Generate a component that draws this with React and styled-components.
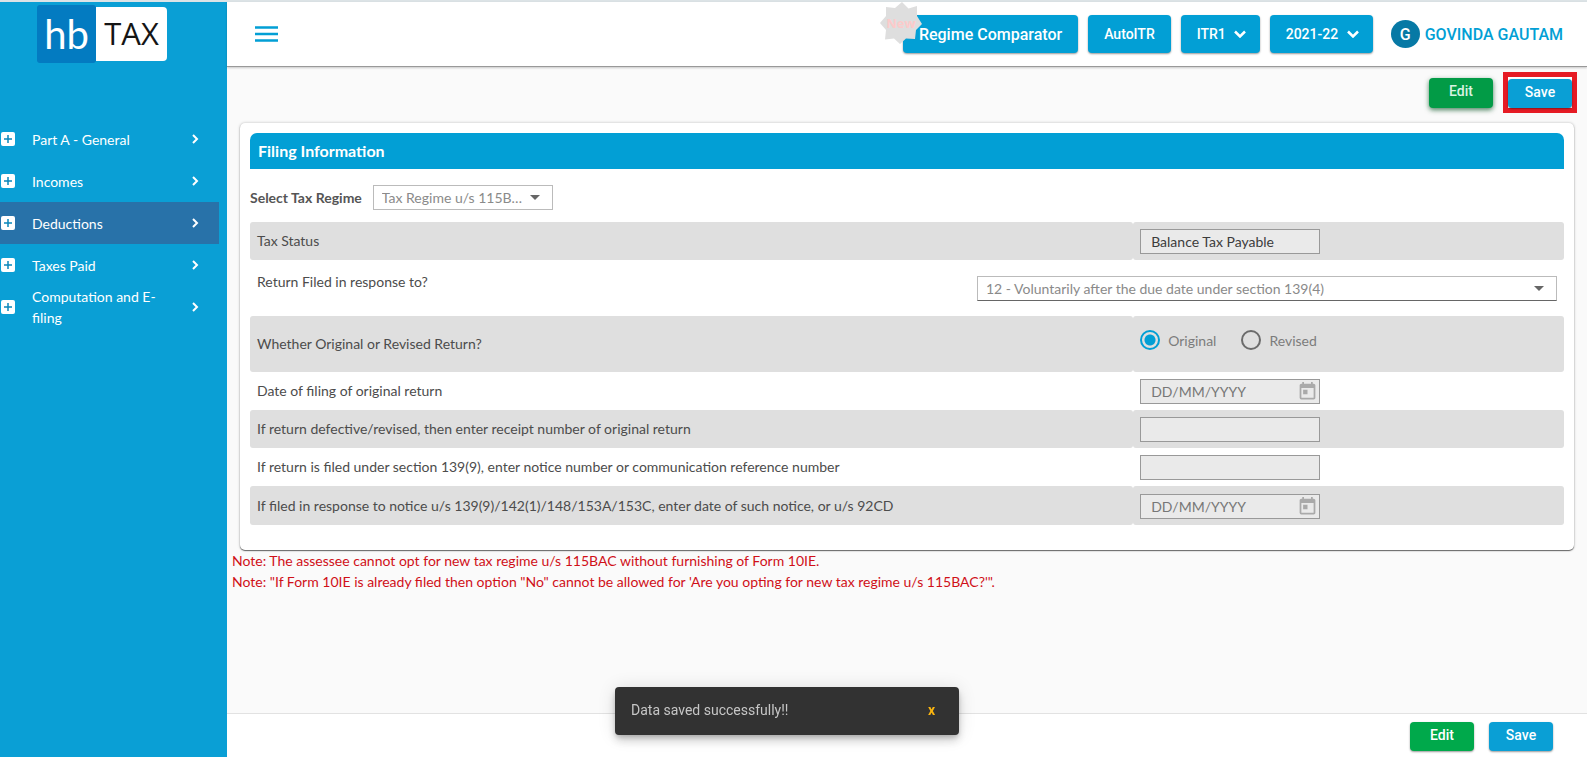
import React, { useState } from "react";
import styled, { createGlobalStyle, css } from "styled-components";
import { MdToday } from "react-icons/md";

const BLUE = "#029fd5";

const GlobalStyle = createGlobalStyle`
  *, *::before, *::after { box-sizing: border-box; }
  body {
    margin: 0;
    background: #fafafa;
    color: #444;
    font: 400 14px/21px Lato, "Liberation Sans", sans-serif;
  }
  button, input, select { font: inherit; margin: 0; }
`;

const Shell = styled.div`
  display: grid;
  grid-template-columns: 227px minmax(0, 1fr);
  min-height: 100vh;
  border-top: 2px solid #dce3e6;
`;

/* Sidebar */

const Sidebar = styled.aside`
  background: #0a9fd5;
  color: #fff;
`;

const Logo = styled.a`
  display: flex;
  align-items: center;
  justify-content: center;
  width: 130px;
  height: 58px;
  margin: 3px auto 55px 37px;
  line-height: 1;
  text-decoration: none;
`;

const LogoMark = styled.span`
  display: flex;
  align-items: center;
  justify-content: center;
  width: 59px;
  height: 58px;
  border-radius: 3px;
  background: #037bc1;
  color: #fff;
  font-size: 40px;
`;

const LogoWord = styled.span`
  display: flex;
  align-items: center;
  justify-content: center;
  flex: 1;
  height: 54px;
  padding-bottom: 2px;
  border-radius: 0 4px 4px 0;
  background: #fff;
  color: #151515;
  font-family: "Open Sans", sans-serif;
  font-size: 31px;
`;

const NavList = styled.ul`
  margin: 0;
  padding: 0 8px 0 0;
  list-style: none;
`;

const NavLink = styled.a`
  display: grid;
  grid-template-columns: 16px minmax(0, 1fr) 8px;
  column-gap: 16px;
  align-items: center;
  height: 42px;
  padding-right: 19px;
  background: ${(p) => (p.$active ? "#2872a9" : "transparent")};
  color: #fff;
  text-decoration: none;
`;

/* Top bar */

const Page = styled.div`
  display: flex;
  flex-direction: column;
  min-width: 0;
`;

const TopBar = styled.header`
  display: flex;
  align-items: center;
  gap: 10px;
  height: 65px;
  padding: 0 24px 0 28px;
  border-bottom: 1px solid #999;
  box-shadow: 0 1px 2px rgba(0, 0, 0, 0.2);
  background: #fff;
  font-family: Roboto, sans-serif;
`;

const MenuButton = styled.button`
  display: flex;
  margin-right: auto;
  padding: 0;
  border: 0;
  background: none;
`;

const barButton = css`
  height: 38px;
  border: 0;
  border-radius: 4px;
  background: ${BLUE};
  box-shadow: 0 1px 2px rgba(0, 0, 0, 0.4);
  color: #fff;
  font-family: Roboto, sans-serif;
  font-weight: 500;
`;

const BarButton = styled.button`
  ${barButton}
  padding: 0 16px;
  font-size: ${(p) => (p.$large ? 16 : 14)}px;
`;

const BadgeAnchor = styled.div`
  position: relative;
`;

const NewBadge = styled.span`
  position: absolute;
  top: -13px;
  left: -23px;
  display: grid;
  place-items: center;
  width: 42px;
  height: 42px;
  color: #fccaca;
  font: 700 13px/1 "Open Sans", sans-serif;

  svg, span { grid-area: 1 / 1; }
`;

const PickerBox = styled.label`
  position: relative;
  display: flex;
  align-items: center;

  svg {
    position: absolute;
    right: 14px;
    pointer-events: none;
  }
`;

const BarSelect = styled.select`
  ${barButton}
  width: ${(p) => p.$width}px;
  padding: 0 34px 0 16px;
  appearance: none;
  font-size: 14px;
`;

const User = styled.a`
  display: flex;
  align-items: center;
  gap: 5px;
  margin-left: 8px;
  color: ${BLUE};
  font-size: 16px;
  font-weight: 500;
  text-decoration: none;
`;

const Avatar = styled.span`
  display: grid;
  place-items: center;
  width: 29px;
  height: 28px;
  border-radius: 50%;
  background: #0779a5;
  color: #fff;
`;

/* Actions */

const Actions = styled.div`
  display: flex;
  align-items: center;
  justify-content: flex-end;
  gap: 10px;
  padding: 5px 10px 10px;
`;

const Highlight = styled.div`
  padding-top: 2px;
  border: 5px solid #e61b24;
  background: #fff;
`;

const ActionButton = styled.button`
  display: block;
  width: 64px;
  height: 29px;
  padding: 0 0 3px;
  border: 0;
  border-radius: 4px;
  background: ${(p) => (p.$green ? "#00a94b" : "#0a9fd5")};
  box-shadow: 0 1px 2px rgba(0, 0, 0, 0.4);
  color: #fff;
  font: 500 14px/20px Roboto, sans-serif;

  ${(p) =>
    p.$raised &&
    css`
      height: 30px;
      background: #029b46;
      box-shadow: 0 2px 5px rgba(0, 80, 30, 0.7);
      color: #d9f3e3;
    `}
`;

/* Form card */

const Card = styled.section`
  margin: 0 13px;
  padding: 10px 10px 25px;
  border-radius: 5px;
  background: #fff;
  box-shadow: 0 1px 1px #666, 0 0 3px rgba(0, 0, 0, 0.25);
`;

const CardTitle = styled.h2`
  margin: 0 0 16px;
  padding: 7px 8px 8px;
  border-radius: 7px 7px 0 0;
  background: ${BLUE};
  color: #fff;
  font-size: 16px;
  font-weight: 700;
  line-height: 21px;
`;

const RegimeRow = styled.div`
  display: flex;
  align-items: center;
  gap: 11px;
  margin-bottom: 12px;

  label { color: #555; font-weight: 700; }
`;

const SelectBox = styled.div`
  position: relative;
  display: flex;
  align-items: center;
  width: ${(p) => p.$width};

  svg {
    position: absolute;
    right: 13px;
    pointer-events: none;
  }
`;

const FieldSelect = styled.select`
  width: 100%;
  height: 25px;
  padding: 0 28px 0 8px;
  border: 1px solid #bbb;
  border-bottom-color: ${(p) => (p.$underlined ? "#666" : "#bbb")};
  border-radius: 0;
  appearance: none;
  background: #fff;
  color: #8a8a8a;
  line-height: 21px;
  overflow: hidden;
  text-overflow: ellipsis;
  white-space: nowrap;
`;

const Row = styled.div`
  display: grid;
  grid-template-columns: ${(p) => (p.$wide ? "minmax(0, 1fr) minmax(0, 594px)" : "minmax(0, 41fr) minmax(0, 20fr)")};
  min-height: ${(p) => (p.$tall ? 56 : 38)}px;

  > * {
    display: flex;
    align-items: center;
    padding: 7px 7px 6px;
    border-radius: 3px;
    background: ${(p) => (p.$shaded ? "#dfdfdf" : "#fff")};
  }

  > :first-child { padding: ${(p) => (p.$wide ? "0 7px 14px" : "0 7px 1px")}; }

  &:last-child > :last-child { padding-top: 8px; }
`;

const RowLabel = styled.label`
  color: #4c4c4c;
`;

const TextField = styled.input`
  width: 180px;
  height: 25px;
  padding: 0 10px;
  border: 1px solid #999;
  border-radius: 0;
  background: #eaeaea;
  color: #3c3c3c;

  &::placeholder { color: #777; opacity: 1; }
`;

const DateBox = styled.div`
  position: relative;
  display: flex;
`;

const DateButton = styled.button`
  position: absolute;
  top: 2px;
  right: 2px;
  display: flex;
  padding: 0;
  border: 0;
  background: none;
  color: #aaa;
`;

const RadioGroup = styled.div`
  gap: 25px;

  && { padding-bottom: 15px; }
`;

const RadioLabel = styled.label`
  display: flex;
  align-items: center;
  gap: 8px;
  color: #7c7c7c;
`;

const Radio = styled.input`
  width: 20px;
  height: 20px;
  border: 2px solid #6b6b6b;
  border-radius: 50%;
  appearance: none;

  &:checked {
    border-color: ${BLUE};
    background: radial-gradient(circle, ${BLUE} 5px, transparent 6px);
  }
`;

const Notes = styled.div`
  margin-bottom: 40px;
  padding: 0 5px;
  color: #d01018;

  p { margin: 0; }
`;

const Footer = styled.footer`
  display: flex;
  gap: 15px;
  justify-content: flex-end;
  height: 44px;
  margin-top: auto;
  padding: 8px 34px 0;
  border-top: 1px solid #e2e2e2;
  background: #fff;
`;

const ToastLayer = styled.div`
  position: fixed;
  right: 13px;
  bottom: 22px;
  left: 0;
  display: flex;
  justify-content: center;
  pointer-events: none;
`;

const Toast = styled.div`
  display: flex;
  align-items: center;
  justify-content: space-between;
  width: 344px;
  height: 48px;
  padding: 0 24px 2px 16px;
  border-radius: 4px;
  background: #323232;
  box-shadow: 0 3px 5px -1px rgba(0, 0, 0, 0.2), 0 6px 10px rgba(0, 0, 0, 0.14), 0 1px 18px rgba(0, 0, 0, 0.12);
  color: #c6c6c6;
  font: 400 14px/20px Roboto, sans-serif;
  pointer-events: auto;

  button {
    padding: 0;
    border: 0;
    background: none;
    color: #f9b410;
    font-weight: 700;
  }
`;

const PlusIcon = () => (
  <svg width="16" height="14" viewBox="0 0 16 14" aria-hidden="true">
    <rect x="1" width="14" height="14" rx="2" fill="#fff" />
    <path d="M8 3v8M4 7h8" stroke="#0a86bb" strokeWidth="1.5" />
  </svg>
);

const Chevron = () => (
  <svg width="8" height="10" viewBox="0 0 8 10" fill="none" aria-hidden="true">
    <path d="M1 1l4 4-4 4" stroke="#fff" strokeWidth="2" />
  </svg>
);

const ChevronDown = () => (
  <svg width="12" height="8" viewBox="0 0 12 8" fill="none" aria-hidden="true">
    <path d="M1 1.5l5 5 5-5" stroke="#fff" strokeWidth="2.5" />
  </svg>
);

const Caret = () => (
  <svg width="10" height="5" viewBox="0 0 10 5" aria-hidden="true">
    <path d="M0 0h10L5 5z" fill="#666" />
  </svg>
);

const Burst = () => (
  <svg width="42" height="42" viewBox="0 0 42 42" aria-hidden="true">
    <path d="M22 0L28.500 6.500L37 4V14L42 22L36 28L35 37L26 36.500L20 42L14 36.500L5 37.500L6 28L0 21L6 14L6 5L15 6Z" fill="#dedede" />
  </svg>
);

const NAV = ["Part A - General", "Incomes", "Deductions", "Taxes Paid", "Computation and E-filing"];

function BarPicker({ label, value, width }) {
  return (
    <PickerBox>
      <BarSelect aria-label={label} $width={width}>
        <option>{value}</option>
      </BarSelect>
      <ChevronDown />
    </PickerBox>
  );
}

function TextRow({ id, label, shaded, value }) {
  return (
    <Row $shaded={shaded}>
      <RowLabel htmlFor={id}>{label}</RowLabel>
      <div>
        <TextField id={id} defaultValue={value} readOnly />
      </div>
    </Row>
  );
}

function DateRow({ id, label, shaded }) {
  return (
    <Row $shaded={shaded}>
      <RowLabel htmlFor={id}>{label}</RowLabel>
      <div>
        <DateBox>
          <TextField id={id} placeholder="DD/MM/YYYY" readOnly />
          <DateButton type="button" aria-label="Open calendar">
            <MdToday size={21} />
          </DateButton>
        </DateBox>
      </div>
    </Row>
  );
}

export default function App() {
  const [kind, setKind] = useState("Original");
  const [toastOpen, setToastOpen] = useState(true);

  return (
    <>
      <GlobalStyle />
      <Shell>
        <Sidebar>
          <Logo href="#home">
            <LogoMark>hb</LogoMark>
            <LogoWord>TAX</LogoWord>
          </Logo>
          <nav>
            <NavList>
              {NAV.map((item) => (
                <li key={item}>
                  <NavLink href="#section" $active={item === "Deductions"}>
                    <PlusIcon />
                    <span>{item}</span>
                    <Chevron />
                  </NavLink>
                </li>
              ))}
            </NavList>
          </nav>
        </Sidebar>

        <Page>
          <TopBar>
            <MenuButton type="button" aria-label="Menu">
              <svg width="23" height="16" viewBox="0 0 23 16" aria-hidden="true">
                <path d="M0 1.500h23M0 8h23M0 14.500h23" stroke={BLUE} strokeWidth="2.500" />
              </svg>
            </MenuButton>
            <BadgeAnchor>
              <BarButton type="button" $large>Regime Comparator</BarButton>
              <NewBadge>
                <Burst />
                <span>New</span>
              </NewBadge>
            </BadgeAnchor>
            <BarButton type="button">AutoITR</BarButton>
            <BarPicker label="Form" value="ITR1" width={79} />
            <BarPicker label="Assessment year" value="2021-22" width={103} />
            <User href="#profile">
              <Avatar>G</Avatar>
              GOVINDA GAUTAM
            </User>
          </TopBar>

          <main>
            <Actions>
              <ActionButton type="button" $green $raised>Edit</ActionButton>
              <Highlight>
                <ActionButton type="button">Save</ActionButton>
              </Highlight>
            </Actions>

            <Card>
              <CardTitle>Filing Information</CardTitle>
              <RegimeRow>
                <label htmlFor="regime">Select Tax Regime</label>
                <SelectBox $width="180px">
                  <FieldSelect id="regime">
                    <option>Tax Regime u/s 115BAC</option>
                  </FieldSelect>
                  <Caret />
                </SelectBox>
              </RegimeRow>

              <div>
                <TextRow id="status" label="Tax Status" value="Balance Tax Payable" shaded />
                <Row $wide $tall>
                  <RowLabel htmlFor="response">Return Filed in response to?</RowLabel>
                  <div>
                    <SelectBox $width="100%">
                      <FieldSelect id="response" $underlined>
                        <option>12 - Voluntarily after the due date under section 139(4)</option>
                      </FieldSelect>
                      <Caret />
                    </SelectBox>
                  </div>
                </Row>
                <Row $shaded $tall>
                  <RowLabel as="span" id="kind">Whether Original or Revised Return?</RowLabel>
                  <RadioGroup role="radiogroup" aria-labelledby="kind">
                    {["Original", "Revised"].map((option) => (
                      <RadioLabel key={option}>
                        <Radio type="radio" name="kind" checked={kind === option} onChange={() => setKind(option)} />
                        {option}
                      </RadioLabel>
                    ))}
                  </RadioGroup>
                </Row>
                <DateRow id="original-date" label="Date of filing of original return" />
                <TextRow id="receipt" label="If return defective/revised, then enter receipt number of original return" shaded />
                <TextRow id="notice" label="If return is filed under section 139(9), enter notice number or communication reference number" />
                <DateRow
                  id="notice-date"
                  label="If filed in response to notice u/s 139(9)/142(1)/148/153A/153C, enter date of such notice, or u/s 92CD"
                  shaded
                />
              </div>
            </Card>

            <Notes>
              <p>Note: The assessee cannot opt for new tax regime u/s 115BAC without furnishing of Form 10IE.</p>
              <p>Note: "If Form 10IE is already filed then option "No" cannot be allowed for 'Are you opting for new tax regime u/s 115BAC?'".</p>
            </Notes>
          </main>

          <Footer>
            <ActionButton type="button" $green>Edit</ActionButton>
            <ActionButton type="button">Save</ActionButton>
          </Footer>
        </Page>
      </Shell>

      {toastOpen && (
        <ToastLayer>
          <Toast role="status">
            <span>Data saved successfully!!</span>
            <button type="button" aria-label="Dismiss" onClick={() => setToastOpen(false)}>x</button>
          </Toast>
        </ToastLayer>
      )}
    </>
  );
}
